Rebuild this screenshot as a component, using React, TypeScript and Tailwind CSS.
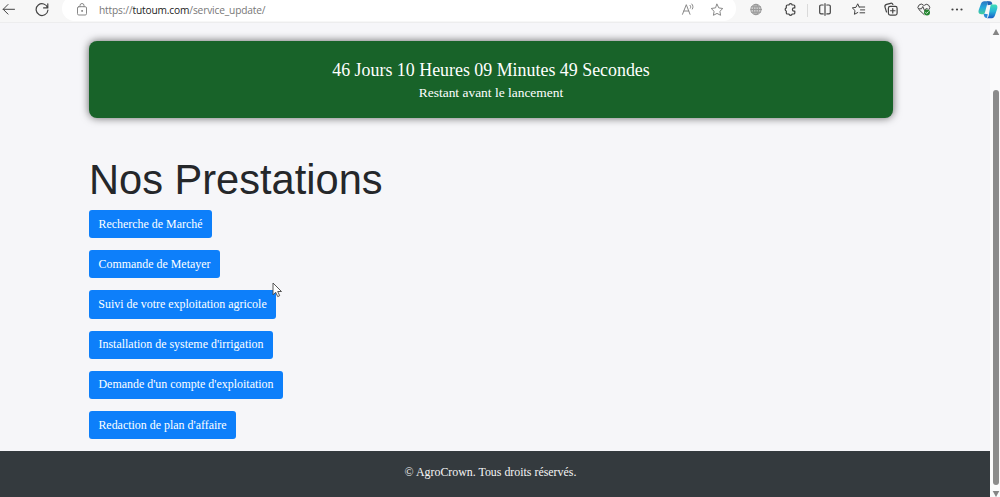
import type { ReactNode } from 'react';

const SERVICES = [
  { label: 'Recherche de Marché', width: 'w-[123px]' },
  { label: 'Commande de Metayer', width: 'w-[131px]' },
  { label: "Suivi de votre exploitation agricole", width: 'w-[187px]' },
  { label: "Installation de systeme d'irrigation", width: 'w-[184px]' },
  { label: "Demande d'un compte d'exploitation", width: 'w-[194px]' },
  { label: "Redaction de plan d'affaire", width: 'w-[147px]' },
];

function Icon({ className = '', children }: { className?: string; children: ReactNode }) {
  return (
    <svg
      viewBox="0 0 16 16"
      fill="none"
      stroke="currentColor"
      strokeLinecap="round"
      strokeLinejoin="round"
      className={`h-4 w-4 shrink-0 ${className}`}
    >
      {children}
    </svg>
  );
}

function BrowserBar() {
  return (
    <div className="flex h-[23px] shrink-0 items-start overflow-hidden border-b border-[#ededee] bg-[#f7f7f7] text-[#444]">
      <Icon className="ml-px mt-[1px]">
        <path d="M13.5 8.3H2.2M7 3.5 2.2 8.3 7 13.1" />
      </Icon>
      <Icon className="ml-[17px] mt-[1px]">
        <path strokeWidth="1.2" d="M13.7 7a5.9 5.9 0 1 0 .2 2.2M13.8 2.8v4.1H9.6" />
      </Icon>

      {/* Address field */}
      <div className="-mt-[4px] ml-[12px] flex h-[25px] w-[674px] items-start rounded-full bg-white pt-[5px]">
        <Icon className="ml-[12px] text-[#888]">
          <rect x="3.5" y="5.7" width="9" height="8.3" rx="1.3" />
          <path d="M6 5.7V4.5a2 2 0 0 1 4 0v1.2" />
          <circle cx="8" cy="9.9" r=".5" fill="currentColor" />
        </Icon>
        <span className="ml-[9px] mt-[1px] whitespace-nowrap font-['Open_Sans','Noto_Sans',sans-serif] text-[10.2px] leading-4 tracking-[-0.16px] text-[#777]">
          https://<span className="text-[#222]">tutoum.com</span>/service_update/
        </span>
        <Icon className="ml-auto mr-[13px] text-[#888]">
          <path d="m2.5 13.3 3.8-9.6L10 13.3M3.8 10h5M10 4.3c.9.9.9 2 .4 2.9M11.8 3c1.4 1.4 1.5 3.3.6 5" />
        </Icon>
        <Icon className="mr-[11px] mt-[1px] text-[#888]">
          <path d="m8 2.2 1.8 3.7 4 .6-2.9 2.8.7 4L8 11.4l-3.6 1.9.7-4-2.9-2.8 4-.6z" />
        </Icon>
      </div>

      <Icon className="ml-[12px] mt-[1px] text-[#999]">
        <circle cx="8" cy="8.5" r="5.2" fill="#cfcfcf" />
        <ellipse cx="8" cy="8.5" rx="2.5" ry="5.2" />
        <path d="M8 3.3v10.4M2.8 8.5h10.4M3.5 5.8h9M3.5 11.2h9" />
      </Icon>
      <Icon className="ml-[18px] mt-[1px]">
        <path
          strokeWidth="1.2"
          d="M5.3 4h1.6a1.7 1.7 0 0 1 3.3 0h1.6c.6 0 1 .4 1 1v1.9H12a1.6 1.6 0 0 0 0 3.2h.8V12c0 .6-.4 1-1 1h-1.6a1.7 1.7 0 0 1-3.3 0H5.3a1 1 0 0 1-1-1v-1.9a1.7 1.7 0 0 1 0-3.2V5c0-.6.4-1 1-1Z"
        />
      </Icon>
      <div className="ml-[9px] mt-[4px] h-[13px] w-px bg-[#dadada]" />
      <Icon className="ml-[9px] mt-[1px]">
        <path strokeWidth="1.2" d="M6.2 4H4a1.3 1.3 0 0 0-1.3 1.3v6.3A1.3 1.3 0 0 0 4 12.9h2.2M9.8 4H12a1.3 1.3 0 0 1 1.3 1.3v6.3a1.3 1.3 0 0 1-1.3 1.3H9.8M8 2.7v11.6" />
      </Icon>
      <Icon className="ml-[18px] mt-[1px]">
        <path d="M8.2 6 6.7 2.8 5 6.3l-3.7.6L4 9.5l-.6 3.8 3.4-1.8M8.2 6h5.5M9.5 8.9h4.2M9 11.8h4.7" />
      </Icon>
      <Icon className="ml-[16px] mt-[1px]">
        <rect x="5.4" y="5.4" width="8.7" height="8.7" rx="1.8" strokeWidth="1.2" />
        <path strokeWidth="1.2" d="M9.75 7.5v4.5M7.5 9.75H12M3.5 11 2 6.1a2.3 2.3 0 0 1 1.6-2.8l4-1a2 2 0 0 1 2.3 1.2" />
      </Icon>
      <Icon className="ml-[17px] mt-[1px]">
        <path d="M8 13.5 3 8.7a3.2 3.2 0 0 1 4.5-4.6l.5.5.5-.5A3.2 3.2 0 0 1 13 8.6M3.5 7.8h2l1.3-2.3 1.8 4.2 1.2-1.9h1.5" />
        <circle cx="11" cy="11.5" r="3" fill="#268632" stroke="none" />
        <path stroke="white" strokeWidth=".8" d="m9.7 11.5.9.9 1.7-1.7" />
      </Icon>
      <Icon className="ml-[17px] mt-[1px]">
        <g fill="currentColor" stroke="none">
          <circle cx="3.5" cy="8.5" r="1.1" />
          <circle cx="8" cy="8.5" r="1.1" />
          <circle cx="12.5" cy="8.5" r="1.1" />
        </g>
      </Icon>
      <CopilotLogo />
    </div>
  );
}

function CopilotLogo() {
  return (
    <svg viewBox="0 0 20 20" className="ml-[13px] h-5 w-5 shrink-0">
      <defs>
        <linearGradient id="copilotLeft" x1="0" y1="0" x2="0" y2="1">
          <stop offset="0" stopColor="#2b75c2" />
          <stop offset=".5" stopColor="#27a9dc" />
          <stop offset="1" stopColor="#43cf9a" />
        </linearGradient>
        <linearGradient id="copilotRight" x1="0" y1="0" x2="0" y2="1">
          <stop offset="0" stopColor="#3edfb5" />
          <stop offset=".5" stopColor="#27b5d8" />
          <stop offset="1" stopColor="#195bc5" />
        </linearGradient>
      </defs>
      <path fill="#1f62b3" d="M9 1.2h2.6c1.7 0 2.4 1.2 2.8 3.2l-4.8.8Z" />
      <path fill="#2a8bd8" d="m5.4 13.4 4.4.8-.9 3.8c-1.8 0-2.6-1-2.9-2.4Z" />
      <path fill="url(#copilotLeft)" d="M6.2 1.2H11c-1 .5-1.4 1.5-1.8 2.8l-2 7.6c-.5 1.8-1 2.6-2.6 2.6H3.4C.6 14.2.1 12.2.8 9.8L2.9 4c.7-1.9 1.7-2.8 3.3-2.8Z" />
      <path fill="url(#copilotRight)" d="M13.6 4.4h3c2.7 0 3.2 2 2.6 4.4l-2.1 6.2c-.6 1.9-1.5 3.2-3.2 3.2H8.7c1.1-.4 1.6-1.4 2-2.8L12.2 7c.4-1.6.4-2.3 1.4-2.6Z" />
      <path fill="#f7f7f7" d="M9.4 6h2l-1.9 7.4h-2Z" />
    </svg>
  );
}

function Countdown() {
  return (
    <div className="h-[77px] rounded-lg bg-[#186329] pt-[17px] text-center text-white shadow-[0_0_8px_rgba(0,0,0,0.6)]">
      <p className="text-[17.9px] leading-6">46 Jours 10 Heures 09 Minutes 49 Secondes</p>
      <p className="text-[13.45px] leading-[22px]">Restant avant le lancement</p>
    </div>
  );
}

function Scrollbar() {
  return (
    <div className="flex w-[10px] shrink-0 flex-col items-center bg-[#fafafb] pt-[6px]">
      <svg viewBox="0 0 8 6" className="ml-[2px] h-[6px] w-2 fill-[#858585]">
        <path d="M4 0 7.3 6H.7Z" />
      </svg>
      <div className="ml-[2px] mt-[55px] h-[397px] w-[6px] rounded-full bg-[#8b8b8b]" />
      <svg viewBox="0 0 8 6" className="ml-[2px] mt-[6px] h-[6px] w-2 fill-[#858585]">
        <path d="M.7 0h6.6L4 6Z" />
      </svg>
    </div>
  );
}

export default function App() {
  return (
    <div className="relative flex h-[497px] w-[1000px] flex-col overflow-hidden bg-[#f6f6f9] font-['Liberation_Serif',serif]">
      <BrowserBar />
      <div className="flex min-h-0 flex-1">
        <div className="flex min-w-0 flex-1 flex-col">
          <main className="ml-[89px] w-[804px] flex-1 pt-[18px]">
            <Countdown />
            <h1 className="mt-[38px] whitespace-nowrap font-['Liberation_Sans',sans-serif] text-[41.6px] leading-[48px] text-[#25272a]">
              Nos Prestations
            </h1>
            <div className="mt-[6px] flex flex-col items-start gap-3">
              {SERVICES.map((service) => (
                <button
                  key={service.label}
                  className={`h-[28.2px] whitespace-nowrap rounded-[3px] bg-[#0d7ffa] pt-px text-center text-[11.95px] text-white ${service.width}`}
                >
                  {service.label}
                </button>
              ))}
            </div>
          </main>
          <footer className="h-[46px] shrink-0 bg-[#343a3e] pr-[9px] pt-[11px] text-center text-[11.9px] leading-5 text-[#f4f5f5]">
            © AgroCrown. Tous droits réservés.
          </footer>
        </div>
        <Scrollbar />
      </div>

      {/* Mouse pointer */}
      <svg viewBox="0 0 11 16" className="absolute left-[272px] top-[282px] h-4 w-[11px]">
        <path d="M1 1v11.8l2.7-2.5 2 4.3 2-.9-2-4.2h3.8Z" fill="white" stroke="#454545" strokeWidth=".9" />
      </svg>
    </div>
  );
}
